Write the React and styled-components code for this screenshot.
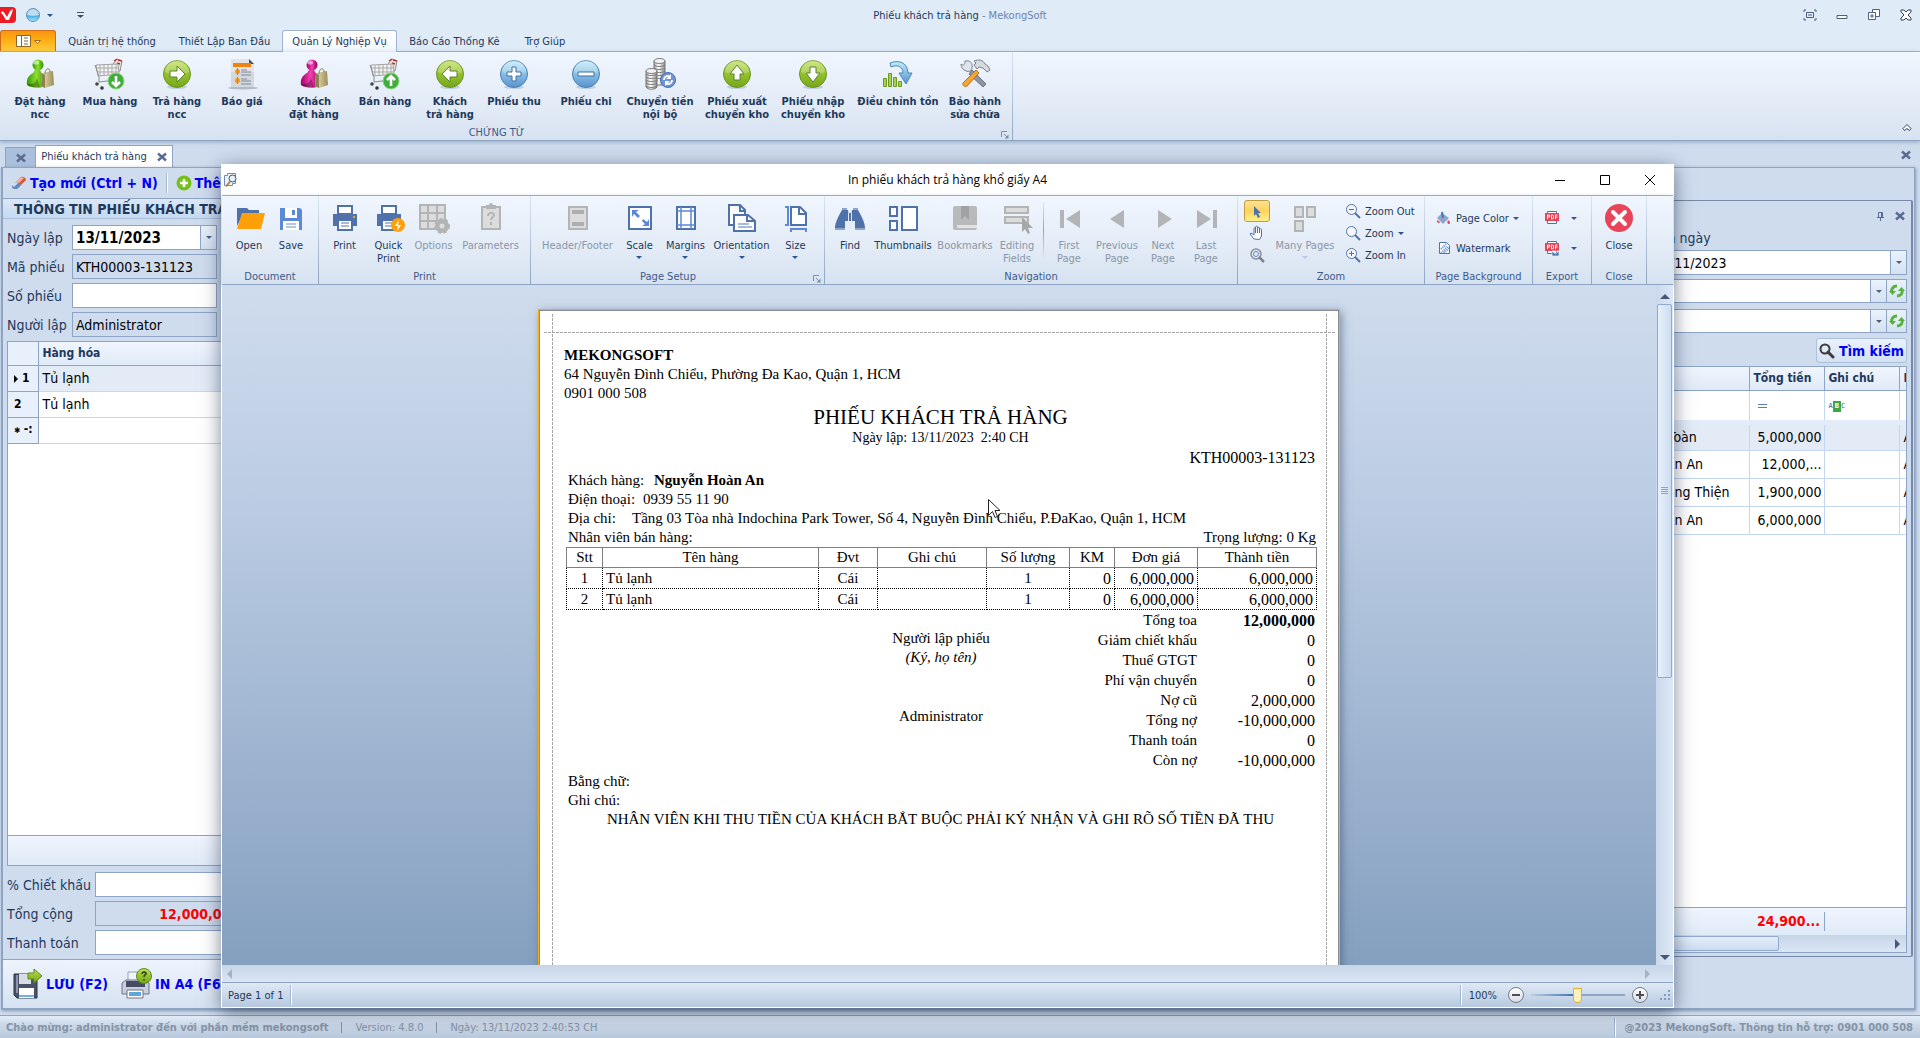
import React from 'react';
import styled, { createGlobalStyle, css } from 'styled-components';

const LINE = '#8da4c4';
const NAVY = '#1e395b';

/* ---------- icons ---------- */

const Defs = () => (
    <DefsSvg aria-hidden="true">
        <defs>
            <linearGradient id="green" x1="0" y1="0" x2="0" y2="1">
                <stop offset="0" stopColor="#c3e062" />
                <stop offset="0.5" stopColor="#93c22c" />
                <stop offset="1" stopColor="#76a51c" />
            </linearGradient>
            <linearGradient id="blue" x1="0" y1="0" x2="0" y2="1">
                <stop offset="0" stopColor="#c4ecf8" />
                <stop offset="0.5" stopColor="#86bfe4" />
                <stop offset="1" stopColor="#5a93cc" />
            </linearGradient>
            <linearGradient id="lime" x1="0" y1="0" x2="1" y2="0">
                <stop offset="0" stopColor="#2f9a05" />
                <stop offset="0.5" stopColor="#8fe02c" />
                <stop offset="1" stopColor="#2f8a05" />
            </linearGradient>
            <linearGradient id="pink" x1="0" y1="0" x2="1" y2="0">
                <stop offset="0" stopColor="#a3006a" />
                <stop offset="0.5" stopColor="#f43fb0" />
                <stop offset="1" stopColor="#8e0059" />
            </linearGradient>
            <linearGradient id="bag" x1="0" y1="0" x2="1" y2="0">
                <stop offset="0" stopColor="#efe6bd" />
                <stop offset="1" stopColor="#9c8c55" />
            </linearGradient>
            <linearGradient id="steel" x1="0" y1="0" x2="1" y2="0">
                <stop offset="0" stopColor="#a5a5a5" />
                <stop offset="0.4" stopColor="#ffffff" />
                <stop offset="1" stopColor="#8f8f8f" />
            </linearGradient>
            <linearGradient id="orb" x1="0" y1="0" x2="0" y2="1">
                <stop offset="0" stopColor="#5b93c8" />
                <stop offset="0.5" stopColor="#3aa5dd" />
                <stop offset="1" stopColor="#a8eaff" />
            </linearGradient>
        </defs>
    </DefsSvg>
);

const Svg = ({ s = 32, children }) => (
    <svg width={s} height={s} viewBox={`0 0 ${s} ${s}`} fill="none" aria-hidden="true">
        {children}
    </svg>
);

const arrows = {
    right: 'M9 13h7V8l8 8-8 8v-5H9z',
    left: 'M23 13h-7V8l-8 8 8 8v-5h7z',
    up: 'M13 22v-6H9l7-9 7 9h-4v6z',
    down: 'M13 9v6H9l7 9 7-9h-4V9z',
    plus: 'M14 9h4v5h5v4h-5v5h-4v-5H9v-4h5z',
    minus: 'M8 14h16v4H8z',
};

const RoundIcon = ({ kind, tone }) => (
    <Svg>
        <ellipse cx="16" cy="29" rx="10" ry="2" fill="#9fb0c4" opacity=".5" />
        <circle cx="16" cy="16" r="13.5" fill={`url(#${tone})`} stroke={tone === 'green' ? '#6b9422' : '#4a80b8'} />
        <path d="M4 14a12 12 0 0 1 24 0c-6 3-18 3-24 0z" fill="#fff" opacity=".22" />
        <path d={arrows[kind]} fill="#fff" stroke={tone === 'green' ? '#5d8030' : '#3f6ea5'} strokeLinejoin="round" />
    </Svg>
);

const PersonIcon = ({ tone }) => (
    <Svg>
        <path d="M3 27c-1-6 2-10 6-12l2-3h5l2 4c3 2 5 6 4 12-6 3-15 2-19-1z" fill={`url(#${tone})`} />
        <circle cx="14" cy="7" r="5.5" fill={`url(#${tone})`} />
        <ellipse cx="12" cy="4.5" rx="3" ry="2" fill="#fff" opacity=".55" />
        <path d="M3 27c4-3 7 2 10-7l3 9c-5 1-10 0-13-2z" fill="#000" opacity=".3" />
        <path d="M18 15l11-2 1 14-9 3-4-2z" fill="url(#bag)" />
        <path d="M18 15l3 2v13l-4-2z" fill="#8d8153" />
        <path d="M21 16c0-6 5-7 5-2" stroke="#8a7a49" />
    </Svg>
);

const CartIcon = ({ up }) => (
    <Svg>
        <path d="M19 6l4-5 5 2-2 10h-7z" fill="#e4e4e4" stroke="#8d8d8d" />
        <path d="M20 3l3-2M24 2l4 1M23 5l3 1" stroke="#b3322e" strokeWidth="1.5" />
        <path d="M2 7l22-1 1 10-21 2z" fill="#f4f4f4" stroke="#a3a3a3" />
        <path d="M6 7v10M10 7v10M14 6v11M18 6v10M22 6v10M3 10h21M3 14h21" stroke="#a9a9a9" />
        <path d="M1 7l4 12v5l16-2" stroke="#8d8d8d" />
        <circle cx="3" cy="26" r="1.8" fill="#444" />
        <circle cx="8" cy="30" r="1.8" fill="#333" />
        <circle cx="22" cy="23" r="8" fill="#3fae3c" stroke="#93d27c" />
        {up ? (
            <path d="M22 28v-9M18 22l4-4 4 4" stroke="#fff" strokeWidth="2.6" />
        ) : (
            <path d="M22 18v9M18 24l4 4 4-4" stroke="#fff" strokeWidth="2.6" />
        )}
    </Svg>
);

const QuoteIcon = () => (
    <Svg>
        <ellipse cx="17" cy="30" rx="15" ry="1.5" fill="#8e99a8" opacity=".6" />
        <path d="M5 1h18l5 5v23H5z" fill="#e2e4e8" />
        <path d="M5 14h23v15H5z" fill="#cfd1d6" opacity=".7" />
        <path d="M23 1v5h5z" fill="#4b4f55" />
        <path d="M7 5h18v4H7z" fill="#ee8311" />
        <path d="M15 12h6M15 14h10M15 17h10M15 21h6M15 23h10M15 26h10" stroke="#7d8c9c" />
        <circle cx="11.5" cy="13.5" r="2.5" fill="#f39a1f" />
        <circle cx="11.5" cy="22.5" r="2.5" fill="#f39a1f" />
        <path d="M11.5 10v7M11.5 19v7" stroke="#e27c08" />
    </Svg>
);

const CoinsIcon = () => (
    <Svg>
        <path d="M10 3v24h11V3" fill="url(#steel)" stroke="#777" />
        {[7, 10, 13, 16, 19].map((y) => (
            <path key={y} d={`M10 ${y}c2 2 9 2 11 0`} stroke="#777" />
        ))}
        <ellipse cx="15.5" cy="3" rx="5.5" ry="2.5" fill="#f1f1f1" stroke="#777" />
        <path d="M2 13v16c2 3 9 3 11 0V13" fill="url(#steel)" stroke="#777" />
        {[16, 19, 22, 25, 28].map((y) => (
            <path key={y} d={`M2 ${y}c2 2 9 2 11 0`} stroke="#777" />
        ))}
        <ellipse cx="7.5" cy="13" rx="5.5" ry="2.5" fill="#f1f1f1" stroke="#777" />
        <circle cx="24" cy="22" r="7.5" fill="#6d94d6" stroke="#4a6fb4" />
        <path d="M20 22c0-4 4-5 6-3M28 22c0 4-4 5-6 3" stroke="#fff" strokeWidth="1.8" />
        <path d="M27 16v5h-5zM21 28v-5h5z" fill="#fff" />
    </Svg>
);

const AdjustIcon = () => (
    <Svg>
        <path d="M1.5 20.5h3v8h-3zM6.5 15.5h3v13h-3zM11.5 19.5h3v9h-3zM16.5 23.5h3v5h-3z" fill="#a9cf55" stroke="#6b9a1e" />
        <path d="M8 5c10-4 18 1 18 10h4l-6 11-7-11h4c0-6-5-9-12-6z" fill="url(#blue)" stroke="#4f87b8" strokeLinejoin="round" />
    </Svg>
);

const ToolsIcon = () => (
    <Svg>
        <path d="M13 12l14 14-3 3-14-13z" fill="#8e95a6" stroke="#6b7280" />
        <path d="M2 6c2 2 4 1 4-3 5-1 8 2 7 7 0 3-3 4-6 3-3-1-5-4-5-7z" fill="#dfe3ea" stroke="#7b8290" />
        <path d="M15 3c5-2 9-1 11 3l3 2 2 4-3 2-4-4-4-1-2 2-3-4 2-2z" fill="#d5d9e0" stroke="#7b8290" />
        <path d="M17 12l3 3L8 28c-2 2-5-1-4-3z" fill="#f6a436" stroke="#b8741c" />
    </Svg>
);

const MenuIcon = () => (
    <svg width="26" height="14" viewBox="0 0 26 14" fill="none" aria-hidden="true">
        <path d="M1.5 1.5h14v11h-14zM6.5 1.5v11" fill="#fff" stroke="#8a6524" />
        <path d="M9 4h4M9 7h4M9 10h4" stroke="#8a6524" />
        <path d="M19.5 6.5h6L22.5 9.5z" fill="#fff" stroke="#a56c16" />
    </svg>
);

const LogoIcon = () => (
    <svg width="16" height="16" viewBox="0 0 16 16" fill="none" aria-hidden="true">
        <path d="M0 0h12a4 4 0 0 1 4 4v8a4 4 0 0 1-4 4H0z" fill="#ed1c24" />
        <path d="M1 5c2-1 3 0 4 2l2 3 3-6 3-2-1 4-3 7H6L3 8C2 7 1 6 1 5z" fill="#fff" />
    </svg>
);

const OrbIcon = () => (
    <Svg s={14}>
        <circle cx="7" cy="7" r="6.5" fill="url(#orb)" stroke="#6c8fb8" />
        <path d="M1 7a6 6 0 0 1 12 0c-3 1-9 1-12 0z" fill="#fff" opacity=".65" />
    </Svg>
);

const ChevronUp = () => (
    <Svg s={10}>
        <path d="M5 1.5L1 5.5l1.5 2L5 5.5l2.5 2L9 5.5z" fill="#fff" stroke="#33415c" />
    </Svg>
);

const XIcon = () => (
    <Svg s={10}>
        <path d="M1 1.5l8 7M9 1.5l-8 7" stroke="#5b6a8f" strokeWidth="2.4" />
    </Svg>
);

const Launcher = () => (
    <Svg s={8}>
        <path d="M.5 6V.5H6" stroke="#7d8fa9" />
        <path d="M3 3l3 3" stroke="#7d8fa9" />
        <path d="M7.5 3.5v4h-4z" fill="#7d8fa9" />
    </Svg>
);

const EraserIcon = () => (
    <Svg s={16}>
        <path d="M1 11l9-9c1-1 5 0 5 3l-9 9c-2 0-5 0-5-3z" fill="#d6573a" />
        <path d="M1 11l4-4 5 3-4 4c-2 0-5 0-5-3z" fill="#5d8ccb" />
        <path d="M5 7l5-5 3 1-5 5z" fill="#f3b29c" />
        <path d="M1 10l4-3 2 1-4 4z" fill="#cfe0f5" />
    </Svg>
);

const AddIcon = () => (
    <Svg s={16}>
        <circle cx="8" cy="8" r="7.5" fill="#76c01c" />
        <path d="M8 4v8M4 8h8" stroke="#fff" strokeWidth="2.6" />
    </Svg>
);

const SaveBigIcon = () => (
    <Svg>
        <path d="M3 6h23v24H6l-3-3z" fill="#4a5366" stroke="#2e3545" />
        <path d="M8 6h12v10H8z" fill="#d9dee6" />
        <path d="M5 7h2v18H5z" fill="#8d96a8" />
        <path d="M8 20h15v10H8z" fill="#fff" />
        <path d="M8 27h15v2H8z" fill="#69b5e8" />
        <path d="M17 5h6V1l8 7-8 7v-4h-6z" fill="url(#green)" stroke="#5d8a1e" />
    </Svg>
);

const PrintBigIcon = () => (
    <Svg>
        <path d="M8 4h13v12H8z" fill="#f1f4f8" stroke="#9aa2b4" />
        <path d="M2 15l4-3h20l3 3v11H2z" fill="#c9cedb" stroke="#6e7589" />
        <path d="M6 13h19v6H6z" fill="#454d63" />
        <path d="M7 22h16v8H7z" fill="#fff" stroke="#6e7589" />
        <path d="M9 24h12v4H9z" fill="#5fa6dd" />
        <circle cx="24" cy="8" r="7.5" fill="url(#green)" stroke="#5d8a1e" />
        <path d="M22 6c0-3 5-2 4 0-1 1-2 1-2 3M24 11v1.5" stroke="#2d4410" strokeWidth="1.6" />
    </Svg>
);

const PreviewIcon = () => (
    <Svg s={16}>
        <path d="M1.5 3.5h3v-2h8v10h-3v2h-8z" fill="#eef3fb" stroke="#6f8cb8" />
        <circle cx="9.5" cy="6.5" r="3.5" fill="#e3f1fb" stroke="#4c5766" />
        <path d="M7 9.5l-4 5" stroke="#b5824a" strokeWidth="2" />
    </Svg>
);

const D = '#5072aa';
const L = '#5b89d8';
const G = '#b3b4b6';
const GL = '#dcdcdd';

const icons = {
    open: (
        <Svg>
            <path d="M4 6h10l2 2h10v5H10L4 24z" fill={D} />
            <path d="M9 11h23l-4 16H4z" fill="#ff9f0a" />
        </Svg>
    ),
    save: (
        <Svg>
            <path d="M5 6h20l2 2v20H5z" fill={L} />
            <path d="M10 6h12v10H10zM8 19h16v9H8z" fill="#fff" />
            <path d="M17 8h3v5h-3z" fill={L} />
            <path d="M11 22h10M11 25h10" stroke="#9fb4d6" strokeWidth="1.5" />
        </Svg>
    ),
    print: (
        <Svg>
            <path d="M4 12h24v12H4z" fill={D} />
            <path d="M9 4h14v8H9zM9 18h14v10H9z" fill="#fff" stroke={D} strokeWidth="2" />
            <path d="M12 21h8M12 24h8" stroke="#8fa5cc" strokeWidth="1.5" />
            <path d="M24 14h2v2h-2z" fill="#ff9f0a" />
        </Svg>
    ),
    quick: (
        <Svg>
            <path d="M4 12h24v12H4z" fill={D} />
            <path d="M9 4h14v8H9zM9 18h14v10H9z" fill="#fff" stroke={D} strokeWidth="2" />
            <path d="M12 21h8M12 24h8" stroke="#8fa5cc" strokeWidth="1.5" />
            <circle cx="25" cy="23" r="7" fill="#ff9f0a" />
            <path d="M26 18l-4 6h3l-1 5 4-6h-3z" fill="#fff" />
        </Svg>
    ),
    options: (
        <Svg>
            <path d="M2 3h25v24H2z" fill={GL} stroke={G} strokeWidth="2" />
            <path d="M10 3v24M19 3v24M2 11h25M2 19h25" stroke={G} strokeWidth="2" />
            <circle cx="24" cy="24" r="7" fill={G} stroke={G} strokeWidth="2" strokeDasharray="3 3" />
            <circle cx="24" cy="24" r="2.5" fill={GL} />
        </Svg>
    ),
    params: (
        <Svg>
            <path d="M7 5h18v22H7z" fill={GL} stroke={G} strokeWidth="2" />
            <path d="M11 3h3a2 2 0 0 1 4 0h3v4H11z" fill={G} />
            <path d="M13 14c0-4 6-4 6-1 0 2-3 2-3 5M16 20v3" stroke={G} strokeWidth="2" />
        </Svg>
    ),
    header: (
        <Svg>
            <path d="M7 5h18v22H7z" fill={GL} stroke={G} strokeWidth="2" />
            <path d="M10 8h12v4H10zM10 20h12v4H10z" fill="#adaeb0" />
        </Svg>
    ),
    scale: (
        <Svg>
            <path d="M5 5h22v22H5z" fill="#fff" stroke={D} strokeWidth="2" />
            <path d="M8 8h7l-3 2 4 4-2 2-4-4-2 3zM25 24h-7l3-2-3-3 1-2 4 3 2-3z" fill={L} />
        </Svg>
    ),
    margins: (
        <Svg>
            <path d="M7 5h18v22H7z" fill="#fff" stroke={D} strokeWidth="2" />
            <path d="M11 5v22M21 5v22M7 9h18M7 23h18" stroke={L} strokeWidth="1.5" />
        </Svg>
    ),
    orientation: (
        <Svg>
            <path d="M3 3h11l5 5v15H3z" fill="#fff" stroke={D} strokeWidth="2" />
            <path d="M14 3v6h5" stroke={D} strokeWidth="2" />
            <path d="M8 13h14l7 6v10H8z" fill="#fff" stroke={D} strokeWidth="2" />
            <path d="M21 13v6h8" stroke={D} strokeWidth="2" />
            <path d="M12 22h11M12 25h14" stroke="#8fa5cc" strokeWidth="1.5" />
        </Svg>
    ),
    size: (
        <Svg>
            <path d="M11 5h9l6 6v12H11z" fill="#fff" stroke={D} strokeWidth="2" />
            <path d="M19 5v7h7" stroke={D} strokeWidth="2" />
            <path d="M5 5h3v18H5M11 30v-3h15v3" stroke={L} strokeWidth="2" />
        </Svg>
    ),
    find: (
        <Svg>
            <path d="M8 8h6l1 6v12H1c0-5 3-11 7-18zM24 8h-6l-1 6v12h14c0-5-3-11-7-18z" fill={D} />
            <path d="M8 6h5v2H8zM19 6h5v2h-5zM1 26h10v2H1zM21 26h10v2H21z" fill="#8fa5cc" />
            <path d="M11 19h10v8H11z" fill="#e3ecf7" />
            <path d="M14 11h4v8h-4z" fill="#dfe9f5" />
            <path d="M16 11v8" stroke={D} strokeWidth="2" />
        </Svg>
    ),
    thumbs: (
        <Svg>
            <path d="M3 5h7v9H3zM3 19h7v9H3zM15 5h15v23H15z" fill="#fff" stroke={D} strokeWidth="2" />
        </Svg>
    ),
    bookmarks: (
        <Svg>
            <rect x="4" y="4" width="24" height="24" rx="2" fill="#b9babb" />
            <path d="M8 23h20v3H8z" fill="#e2e2e2" />
            <path d="M12 4h8v14l-4-4-4 4z" fill="#a1a2a4" />
        </Svg>
    ),
    fields: (
        <Svg>
            <path d="M4 5h23v6H4zM4 15h23v6H4z" fill={GL} stroke={G} strokeWidth="2" />
            <path d="M21 15v15l3-3 3 5 2-1-2-5h5z" fill="#a6a7a9" />
        </Svg>
    ),
    first: <Svg><path d="M7 8h4v18H7zM27 8v18L13 17z" fill={G} /></Svg>,
    prev: <Svg><path d="M23 8v18L9 17z" fill={G} /></Svg>,
    next: <Svg><path d="M11 8v18l14-9z" fill={G} /></Svg>,
    last: <Svg><path d="M7 8v18l14-9zM23 8h4v18h-4z" fill={G} /></Svg>,
    many: (
        <Svg>
            <path d="M6 5h8v10H6zM18 5h8v10h-8zM6 19h8v10H6z" fill={GL} stroke={G} strokeWidth="2" />
        </Svg>
    ),
    close: (
        <Svg>
            <circle cx="16" cy="16" r="14" fill="#e8445a" />
            <path d="M10 10l12 12M22 10L10 22" stroke="#fff" strokeWidth="4" strokeLinecap="round" />
        </Svg>
    ),
};

const Lens = ({ sign }) => (
    <Svg s={16}>
        <circle cx="6.5" cy="6.5" r="5" fill="#f4f8fd" stroke={D} />
        <path d="M10 10l5 5" stroke={D} strokeWidth="2" />
        {sign && <path d={sign} stroke={D} />}
    </Svg>
);

const smallIcons = {
    pointer: <Svg s={16}><path d="M5 3v10l2-2 2 4 2-1-2-4h3z" fill={D} /></Svg>,
    hand: (
        <Svg s={16}>
            <path d="M5 14l-4-5 1-1 3 2V3.5c0-1 1.500-1 1.500 0V2c0-1 2-1 2 0v1c0-1 2-1 2 0v1.500c0-1 2-1 2 0V11l-2 3.500z" fill="#fff" stroke={D} />
            <path d="M6.5 3v5M8.5 3v5M10.5 4v4" stroke={D} />
        </Svg>
    ),
    magnifier: (
        <Svg s={16}>
            <circle cx="7" cy="7" r="5" fill="#e3e7ee" stroke="#8a8f98" strokeWidth="1.5" />
            <circle cx="7" cy="7" r="2.5" stroke={L} />
            <path d="M10 10l5 5" stroke="#7d828b" strokeWidth="2.5" />
        </Svg>
    ),
    zoomOut: <Lens sign="M4 6.500h5" />,
    zoom: <Lens />,
    zoomIn: <Lens sign="M4 6.500h5M6.500 4v5" />,
    color: (
        <Svg s={16}>
            <path d="M6 3l7 5-6 6-6-6z" fill="#8ea6cf" />
            <path d="M6 2l1 6" stroke={D} strokeWidth="2" />
            <path d="M1 10c-1 3 3 4 3 2zM12 10c2 1 3 4 1 4s-2-2-1-4z" fill="#e8445a" />
        </Svg>
    ),
    watermark: (
        <Svg s={16}>
            <path d="M3.5 2.5h7l3 3v8h-10z" fill="#fff" stroke={D} />
            <path d="M5 13l7-7M5 9l5-5M8 13l5-5" stroke={L} strokeDasharray="1 1" strokeWidth="2" />
        </Svg>
    ),
};

const PdfIcon = ({ mail }) => (
    <PdfBox>
        <svg width="14" height="16" viewBox="0 0 14 16" fill="none" aria-hidden="true">
            <path d="M2.5 3V1.5h9V3M2.5 10v3.5h9V10" fill="#fff" stroke={D} />
            <path d="M0 3h14v8H0z" fill="#e8445a" />
            <path d="M2.5 9V5h2v2h-2M6.5 5h1l1 1v2l-1 1h-1zM10.5 9V5h2M10.5 7h2" stroke="#fff" strokeWidth=".9" />
            {mail && <path d="M7 11h7v5H7zl3.5 3L14 11" fill={D} stroke="#fff" strokeWidth=".6" />}
        </svg>
    </PdfBox>
);

const RefreshIcon = () => (
    <Svg s={16}>
        <path d="M3 9C2 6 4 3 8 3" stroke="#57b13c" strokeWidth="3" />
        <path d="M13 7c1 3-1 6-5 6" stroke="#57b13c" strokeWidth="3" />
        <path d="M0 8h7l-3.5 4zM16 8H9l3.5-4z" fill="#57b13c" />
    </Svg>
);

const Lookup = () => (
    <Svg s={16}>
        <circle cx="6" cy="6" r="4.5" stroke="#3c3c3c" strokeWidth="2" />
        <path d="M9 9l5 5" stroke="#3c3c3c" strokeWidth="3" strokeLinecap="round" />
    </Svg>
);

/* ---------- data ---------- */

const tabs = [
    ['Quản trị hệ thống', 110],
    ['Thiết Lập Ban Đầu', 115],
    ['Quản Lý Nghiệp Vụ', 115],
    ['Báo Cáo Thống Kê', 115],
    ['Trợ Giúp', 66],
];

const commands = [
    { label: ['Đặt hàng', 'ncc'], w: 66, icon: <PersonIcon tone="lime" /> },
    { label: ['Mua hàng'], w: 74, icon: <CartIcon /> },
    { label: ['Trả hàng', 'ncc'], w: 60, icon: <RoundIcon kind="right" tone="green" /> },
    { label: ['Báo giá'], w: 70, icon: <QuoteIcon /> },
    { label: ['Khách', 'đặt hàng'], w: 74, icon: <PersonIcon tone="pink" /> },
    { label: ['Bán hàng'], w: 68, icon: <CartIcon up /> },
    { label: ['Khách', 'trả hàng'], w: 62, icon: <RoundIcon kind="left" tone="green" /> },
    { label: ['Phiếu thu'], w: 66, icon: <RoundIcon kind="plus" tone="blue" /> },
    { label: ['Phiếu chi'], w: 78, icon: <RoundIcon kind="minus" tone="blue" /> },
    { label: ['Chuyển tiền', 'nội bộ'], w: 70, icon: <CoinsIcon /> },
    { label: ['Phiếu xuất', 'chuyển kho'], w: 84, icon: <RoundIcon kind="up" tone="green" /> },
    { label: ['Phiếu nhập', 'chuyển kho'], w: 68, icon: <RoundIcon kind="down" tone="green" /> },
    { label: ['Điều chỉnh tồn'], w: 102, icon: <AdjustIcon /> },
    { label: ['Bảo hành', 'sửa chữa'], w: 52, icon: <ToolsIcon /> },
];

const printGroups = {
    document: [
        { label: ['Open'], w: 42, icon: 'open' },
        { label: ['Save'], w: 42, icon: 'save' },
    ],
    print: [
        { label: ['Print'], w: 42, icon: 'print' },
        { label: ['Quick', 'Print'], w: 46, icon: 'quick' },
        { label: ['Options'], w: 44, icon: 'options', off: true },
        { label: ['Parameters'], w: 70, icon: 'params', off: true },
    ],
    setup: [
        { label: ['Header/Footer'], w: 78, icon: 'header', off: true },
        { label: ['Scale'], w: 46, icon: 'scale', drop: true },
        { label: ['Margins'], w: 46, icon: 'margins', drop: true },
        { label: ['Orientation'], w: 66, icon: 'orientation', drop: true },
        { label: ['Size'], w: 42, icon: 'size', drop: true },
    ],
    find: [
        { label: ['Find'], w: 36, icon: 'find' },
        { label: ['Thumbnails'], w: 70, icon: 'thumbs' },
        { label: ['Bookmarks'], w: 54, icon: 'bookmarks', off: true },
        { label: ['Editing', 'Fields'], w: 50, icon: 'fields', off: true },
    ],
    pages: [
        { label: ['First', 'Page'], w: 48, icon: 'first', off: true },
        { label: ['Previous', 'Page'], w: 48, icon: 'prev', off: true },
        { label: ['Next', 'Page'], w: 44, icon: 'next', off: true },
        { label: ['Last', 'Page'], w: 42, icon: 'last', off: true },
    ],
};

const results = [
    ['Nguyễn Lê Toàn', '5,000,000'],
    ['Nguyễn Hoàn An', '12,000,...'],
    ['Nguyễn Hoàng Thiện', '1,900,000'],
    ['Nguyễn Hoàn An', '6,000,000'],
];

const items = [
    ['1', 'Tủ lạnh', 'Cái', '', '1', '0', '6,000,000', '6,000,000'],
    ['2', 'Tủ lạnh', 'Cái', '', '1', '0', '6,000,000', '6,000,000'],
];

const totals = [
    ['Tổng toa', '12,000,000'],
    ['Giảm chiết khấu', '0'],
    ['Thuế GTGT', '0'],
    ['Phí vận chuyển', '0'],
    ['Nợ cũ', '2,000,000'],
    ['Tổng nợ', '-10,000,000'],
    ['Thanh toán', '0'],
    ['Còn nợ', '-10,000,000'],
];

/* ---------- parts ---------- */

const Commands = ({ list }) => list.map(({ label, w, icon, off, drop }) => (
    <Command key={label.join(' ')} $w={w} disabled={off}>
        {typeof icon === 'string' ? icons[icon] : icon}
        <CommandLabel>
            {label.map((line) => <span key={line}>{line}</span>)}
            {drop && <Caret $gap />}
        </CommandLabel>
    </Command>
));

const Report = () => (
    <Page>
        <b>MEKONGSOFT</b>
        <p>64 Nguyễn Đình Chiểu, Phường Đa Kao, Quận 1, HCM</p>
        <p>0901 000 508</p>
        <ReportTitle>PHIẾU KHÁCH TRẢ HÀNG</ReportTitle>
        <ReportDate>Ngày lập: 13/11/2023&nbsp; 2:40 CH</ReportDate>
        <ReportCode>KTH00003-131123</ReportCode>
        <Facts>
            <Fact $w={86}><dt>Khách hàng:</dt><dd><b>Nguyễn Hoàn An</b></dd></Fact>
            <Fact $w={75}><dt>Điện thoại:</dt><dd>0939 55 11 90</dd></Fact>
            <Fact $w={64}>
                <dt>Địa chỉ:</dt>
                <dd>Tầng 03 Tòa nhà Indochina Park Tower, Số 4, Nguyễn Đình Chiểu, P.ĐaKao, Quận 1, HCM</dd>
            </Fact>
            <Fact $spread><dt>Nhân viên bán hàng:</dt><dd>Trọng lượng: 0 Kg</dd></Fact>
        </Facts>
        <ItemTable>
            <colgroup>
                {[36, 216, 59, 109, 83, 45, 83, 119].map((w, i) => <col key={i} width={w} />)}
            </colgroup>
            <thead>
                <tr>
                    {['Stt', 'Tên hàng', 'Đvt', 'Ghi chú', 'Số lượng', 'KM', 'Đơn giá', 'Thành tiền'].map((h) => (
                        <th key={h}>{h}</th>
                    ))}
                </tr>
            </thead>
            <tbody>
                {items.map((row) => (
                    <tr key={row[0]}>{row.map((v, i) => <td key={i}>{v}</td>)}</tr>
                ))}
            </tbody>
        </ItemTable>
        <Summary>
            <Signer>
                <span>Người lập phiếu</span>
                <i>(Ký, họ tên)</i>
                <span>Administrator</span>
            </Signer>
            <Totals>
                <tbody>
                    {totals.map(([name, value]) => (
                        <tr key={name}><th>{name}</th><td>{value}</td></tr>
                    ))}
                </tbody>
            </Totals>
        </Summary>
        <Notes>
            <p>Bằng chữ:</p>
            <p>Ghi chú:</p>
            <Warning>NHÂN VIÊN KHI THU TIỀN CỦA KHÁCH BẮT BUỘC PHẢI KÝ NHẬN VÀ GHI RÕ SỐ TIỀN ĐÃ THU</Warning>
        </Notes>
    </Page>
);

const PrintWindow = () => (
    <Window>
        <WindowTitle>
            <WindowIcon><PreviewIcon /></WindowIcon>
            <h2>In phiếu khách trả hàng khổ giấy A4</h2>
            <WindowButtons>
                <button aria-label="Minimize"><Svg s={10}><path d="M0 5.500h10" stroke="#000" /></Svg></button>
                <button aria-label="Maximize"><Svg s={10}><path d="M.5.5h9v9h-9z" stroke="#000" /></Svg></button>
                <button aria-label="Close window"><Svg s={10}><path d="M0 0l10 10M10 0L0 10" stroke="#000" /></Svg></button>
            </WindowButtons>
        </WindowTitle>
        <Ribbon>
            <Group $w={97}><Row><Commands list={printGroups.document} /></Row><Caption>Document</Caption></Group>
            <Group $w={212}><Row><Commands list={printGroups.print} /></Row><Caption>Print</Caption></Group>
            <Group $w={294}>
                <Row><Commands list={printGroups.setup} /></Row>
                <Caption $launcher>Page Setup</Caption>
                <LauncherButton aria-label="Page setup"><Launcher /></LauncherButton>
            </Group>
            <Group $w={413}>
                <Row $pad={7}>
                    <Commands list={printGroups.find} />
                    <Divider />
                    <Commands list={printGroups.pages} />
                </Row>
                <Caption>Navigation</Caption>
            </Group>
            <Group $w={187}>
                <Row $pad={6}>
                    <Stack>
                        <ToolButton $on aria-label="Pointer">{smallIcons.pointer}</ToolButton>
                        <ToolButton aria-label="Hand tool">{smallIcons.hand}</ToolButton>
                        <ToolButton aria-label="Magnifier">{smallIcons.magnifier}</ToolButton>
                    </Stack>
                    <Commands list={[{ label: ['Many Pages'], w: 70, icon: 'many', off: true, drop: true }]} />
                    <Stack>
                        <LineButton>{smallIcons.zoomOut}Zoom Out</LineButton>
                        <LineButton>{smallIcons.zoom}Zoom<Caret /></LineButton>
                        <LineButton>{smallIcons.zoomIn}Zoom In</LineButton>
                    </Stack>
                </Row>
                <Caption>Zoom</Caption>
            </Group>
            <Group $w={108}>
                <Row $pad={6}>
                    <Stack $tall>
                        <LineButton>{smallIcons.color}Page Color<Caret /></LineButton>
                        <LineButton>{smallIcons.watermark}Watermark</LineButton>
                    </Stack>
                </Row>
                <Caption>Page Background</Caption>
            </Group>
            <Group $w={59}>
                <Row $pad={7}>
                    <Stack $tall>
                        <LineButton aria-label="Export PDF"><PdfIcon /><Caret /></LineButton>
                        <LineButton aria-label="Mail PDF"><PdfIcon mail /><Caret /></LineButton>
                    </Stack>
                </Row>
                <Caption>Export</Caption>
            </Group>
            <Group $w={55}>
                <Row><Commands list={[{ label: ['Close'], w: 46, icon: 'close' }]} /></Row>
                <Caption>Close</Caption>
            </Group>
        </Ribbon>
        <Preview>
            <PreviewArea>
                <Report />
            </PreviewArea>
            <VScroll>
                <Arrow $dir="up" />
                <VThumb><Grip /></VThumb>
                <VRest />
                <Arrow $dir="down" />
            </VScroll>
        </Preview>
        <HScroll $wide><Arrow $dir="left" $off /><Arrow $dir="right" $off /></HScroll>
        <PreviewStatus>
            <span>Page 1 of 1</span>
            <Separator />
            <Spacer />
            <Separator />
            <label htmlFor="zoom">100%</label>
            <RoundButton aria-label="Zoom out"><Svg s={10}><path d="M1 5h8" stroke="#4c4f5a" strokeWidth="2" /></Svg></RoundButton>
            <ZoomRange id="zoom" type="range" min="0" max="100" defaultValue="49" />
            <RoundButton aria-label="Zoom in"><Svg s={10}><path d="M1 5h8M5 1v8" stroke="#4c4f5a" strokeWidth="2" /></Svg></RoundButton>
            <Svg s={12}>
                <path d="M9 1h2v2H9zM9 5h2v2H9zM9 9h2v2H9zM5 5h2v2H5zM5 9h2v2H5zM1 9h2v2H1z" fill="#7f9dc6" />
            </Svg>
        </PreviewStatus>
    </Window>
);

const EntryPanel = () => (
    <Entry>
        <PanelTitle>THÔNG TIN PHIẾU KHÁCH TRẢ HÀNG</PanelTitle>
        <Form>
            <Field>
                <label htmlFor="date">Ngày lập</label>
                <Box>
                    <Text id="date" defaultValue="13/11/2023" $bold />
                    <DropButton aria-label="Chọn ngày"><Caret $dark /></DropButton>
                </Box>
            </Field>
            <Field>
                <label htmlFor="code">Mã phiếu</label>
                <Box $locked><Text id="code" defaultValue="KTH00003-131123" readOnly /></Box>
            </Field>
            <Field>
                <label htmlFor="number">Số phiếu</label>
                <Box><Text id="number" /></Box>
            </Field>
            <Field>
                <label htmlFor="author">Người lập</label>
                <Box $locked><Text id="author" defaultValue="Administrator" readOnly /></Box>
            </Field>
        </Form>
        <Sheet>
            <GoodsTable>
                <thead><tr><th aria-label="#" /><th>Hàng hóa</th></tr></thead>
                <tbody>
                    <tr className="current"><th><RowMark />1</th><td>Tủ lạnh</td></tr>
                    <tr><th>2</th><td>Tủ lạnh</td></tr>
                    <tr><th><small>✱</small> -:</th><td /></tr>
                </tbody>
            </GoodsTable>
            <SheetFoot />
        </Sheet>
        <Form>
            <Field $wide>
                <label htmlFor="discount">% Chiết khấu</label>
                <Box><Text id="discount" /></Box>
            </Field>
            <Field $wide>
                <label htmlFor="total">Tổng cộng</label>
                <Box $locked><Text id="total" defaultValue="12,000,000" readOnly $total /></Box>
            </Field>
            <Field $wide>
                <label htmlFor="paid">Thanh toán</label>
                <Box><Text id="paid" /></Box>
            </Field>
        </Form>
        <Actions>
            <BlueButton><SaveBigIcon />LƯU (F2)</BlueButton>
            <BlueButton><PrintBigIcon />IN A4 (F6)</BlueButton>
        </Actions>
    </Entry>
);

const SearchPanel = () => (
    <Dock>
        <DockTools>
            <button aria-label="Ghim"><Svg s={10}><path d="M2.5 6V1.5h4V6M1 6.5h7M5.5 1v5M4.5 7v3" stroke="#5b6a8f" /></Svg></button>
            <button aria-label="Đóng"><XIcon /></button>
        </DockTools>
        <SearchForm>
            <label htmlFor="to">Đến ngày</label>
            <Box>
                <Text id="to" defaultValue="13/11/2023" />
                <DropButton aria-label="Chọn ngày"><Caret $dark /></DropButton>
            </Box>
            <Box $low>
                <Select aria-label="Khách hàng" />
                <DropButton aria-label="Mở"><Caret $dark /></DropButton>
                <RefreshButton aria-label="Làm mới khách hàng"><RefreshIcon /></RefreshButton>
            </Box>
            <Box $low>
                <Select aria-label="Nhân viên" />
                <DropButton aria-label="Mở"><Caret $dark /></DropButton>
                <RefreshButton aria-label="Làm mới nhân viên"><RefreshIcon /></RefreshButton>
            </Box>
        </SearchForm>
        <SearchButton><Lookup />Tìm kiếm</SearchButton>
        <ResultSheet>
            <ResultTable>
                <colgroup><col /><col width="75" /><col width="75" /><col width="7" /></colgroup>
                <thead>
                    <tr><th>Khách hàng</th><th>Tổng tiền</th><th>Ghi chú</th><th>N</th></tr>
                </thead>
                <tbody>
                    <tr className="filter">
                        <td />
                        <td><Svg s={16}><path d="M4 6.500h9M4 9.500h9" stroke="#5b7fb5" /></Svg></td>
                        <td><FilterMark><span>A</span><b>B</b><span>C</span></FilterMark></td>
                        <td />
                    </tr>
                    {results.map(([name, sum], i) => (
                        <tr key={i} className={i === 0 ? 'current' : ''}>
                            <td>{name}</td><td className="num">{sum}</td><td /><td>A</td>
                        </tr>
                    ))}
                </tbody>
            </ResultTable>
            <Spacer />
            <ResultFoot><span>24,900...</span></ResultFoot>
            <HScroll><HThumb /><Spacer /><Arrow $dir="right" /></HScroll>
        </ResultSheet>
    </Dock>
);

const App = () => (
    <Shell>
        <GlobalStyle />
        <Defs />
        <TitleBar>
            <Quick>
                <LogoIcon />
                <OrbIcon />
                <Caret />
                <Svg s={8}><path d="M1 1.500h7" stroke="#454f60" /><path d="M1 4h7L4.500 7z" fill="#454f60" /></Svg>
            </Quick>
            <h1>Phiếu khách trả hàng <span>- MekongSoft</span></h1>
            <AppButtons>
                <button aria-label="Toàn màn hình"><Svg s={14}><path d="M1 4V2h2M11 2h2v2M13 10v2h-2M3 12H1v-2M3.5 4.5h7v5h-7zM5 7h4" stroke="#4f5f7e" /></Svg></button>
                <button aria-label="Thu nhỏ"><Svg s={14}><path d="M2 7.500h10v3H2z" fill="#fff" stroke="#4f5f7e" /></Svg></button>
                <button aria-label="Khôi phục"><Svg s={14}><path d="M5.5 1.5h7v7h-7z" fill="#fff" stroke="#4f5f7e" /><path d="M1.5 4.5h7v7h-7zM4 7h2v2H4z" fill="#fff" stroke="#4f5f7e" /></Svg></button>
                <button aria-label="Thoát"><Svg s={14}><path d="M2 2h3l2 2 2-2h3v2L9 7l3 3v2H9l-2-2-2 2H2v-2l3-3-3-3z" fill="#fff" stroke="#33415c" /></Svg></button>
            </AppButtons>
        </TitleBar>
        <Tabs>
            <StartButton aria-label="Menu"><MenuIcon /></StartButton>
            {tabs.map(([name, w]) => (
                <Tab key={name} $w={w} $on={name === 'Quản Lý Nghiệp Vụ'}>{name}</Tab>
            ))}
        </Tabs>
        <Ribbon $bold>
            <Group $w={1013}>
                <Row $pad={7}><Commands list={commands} /></Row>
                <Caption $launcher>CHỨNG TỪ</Caption>
                <LauncherButton aria-label="Chứng từ"><Launcher /></LauncherButton>
            </Group>
            <Spacer />
            <Collapse aria-label="Thu gọn"><ChevronUp /></Collapse>
        </Ribbon>
        <DocTabs>
            <DocTab aria-label="Đóng tab"><XIcon /></DocTab>
            <DocTab $on>Phiếu khách trả hàng<XIcon /></DocTab>
            <Spacer />
            <CloseDoc aria-label="Đóng"><XIcon /></CloseDoc>
        </DocTabs>
        <Main>
            <Toolbar>
                <BlueButton><EraserIcon />Tạo mới (Ctrl + N)</BlueButton>
                <Separator />
                <BlueButton><AddIcon />Thêm hàng hóa</BlueButton>
            </Toolbar>
            <Columns>
                <EntryPanel />
                <SearchPanel />
            </Columns>
        </Main>
        <StatusBar>
            <b>Chào mừng: administrator đến với phần mềm mekongsoft</b>
            <i />
            <span>Version: 4.8.0</span>
            <i />
            <span>Ngày: 13/11/2023 2:40:53 CH</span>
            <Spacer />
            <Separator />
            <b>@2023 MekongSoft. Thông tin hỗ trợ: 0901 000 508</b>
        </StatusBar>
        <PrintWindow />
        <Pointer width="12" height="19" viewBox="0 0 12 19" aria-hidden="true">
            <path d="M.5.5v16l4-4 2.500 6 2.500-1-2.500-6h5z" fill="#fff" stroke="#222" />
        </Pointer>
    </Shell>
);

export default App;

/* ---------- styles ---------- */

const GlobalStyle = createGlobalStyle`
    * { box-sizing: border-box; }
    body {
        margin: 0;
        font: 11px/13px 'DejaVu Sans Condensed', 'DejaVu Sans', 'Noto Sans', sans-serif;
        color: ${NAVY};
    }
    h1, h2, p, dl, dd { margin: 0; font-weight: inherit; }
    button { border: 0; padding: 0; background: none; font: inherit; color: inherit; }
    svg { flex: none; }
`

const DefsSvg = styled.svg`
    display: block;
    width: 0;
    height: 0;
`

const Shell = styled.div`
    position: relative;
    display: flex;
    flex-direction: column;
    min-height: 100vh;
    overflow: hidden;
    background: #cfdcee;
`

const TitleBar = styled.header`
    display: grid;
    grid-template-columns: 1fr auto 1fr;
    align-items: center;
    height: 30px;
    background: #dfebf7;

    h1 { font-size: 11px; }
    h1 span { color: #6d84b0; }
`

const Quick = styled.div`
    display: flex;
    align-items: center;

    svg:nth-child(2) { margin: 0 7px 0 10px; }
    svg:last-child { margin-left: 23px; }
`

const AppButtons = styled.div`
    display: flex;
    justify-content: flex-end;
    gap: 18px;
    padding-right: 7px;

    button { height: 14px; }
`

const Tabs = styled.nav`
    display: flex;
    height: 22px;
    border-bottom: 1px solid #a1b4cf;
    background: #dfebf7;
`

const StartButton = styled.button`
    display: flex;
    align-items: center;
    justify-content: center;
    width: 56px;
    margin-right: 1px;
    border: 1px solid #cf6c1b;
    border-bottom: 0;
    border-radius: 3px 3px 0 0;
    background: linear-gradient(#f9940f, #fdb015 50%, #ffce3c);
`

const Tab = styled.button`
    width: ${props => props.$w}px;
    height: 22px;
    padding-top: 1px;
    white-space: nowrap;
    border-radius: 3px 3px 0 0;
    ${props => props.$on && css`
        padding-top: 0;
        border: 1px solid #a1b4cf;
        border-bottom: 0;
        background: linear-gradient(#fff, #f2f7fe);
    `}
`

const Ribbon = styled.div`
    display: flex;
    height: 89px;
    border-bottom: 1px solid ${LINE};
    background: linear-gradient(#f0f6fe, #e2ebf6 60%, #d7e2f1);
    box-shadow: 0 1px 4px rgba(90, 115, 150, .5);
    font-weight: ${props => props.$bold ? 'bold' : 'normal'};
`

const Group = styled.section`
    position: relative;
    display: flex;
    flex-direction: column;
    flex: none;
    width: ${props => props.$w}px;
    padding-top: 6px;
    border-right: 1px solid;
    border-image: linear-gradient(#dbe6f3, ${LINE}) 1;
`

const Row = styled.div`
    display: flex;
    justify-content: ${props => props.$pad ? 'flex-start' : 'center'};
    flex: 1;
    padding-left: ${props => props.$pad || 0}px;
`

const Caption = styled.div`
    height: 14px;
    padding-right: ${props => props.$launcher ? 19 : 0}px;
    text-align: center;
    font-weight: normal;
    color: #3f5a8a;
`

const LauncherButton = styled.button`
    position: absolute;
    right: 3px;
    bottom: 3px;
    height: 8px;
`

const Command = styled.button`
    display: flex;
    flex-direction: column;
    align-items: center;
    width: ${props => props.$w}px;
    white-space: nowrap;
    color: ${props => props.disabled ? '#8b97a8' : NAVY};
`

const CommandLabel = styled.span`
    display: flex;
    flex-direction: column;
    align-items: center;
    margin-top: 5px;
`

const Caret = styled.i`
    display: inline-block;
    flex: none;
    border: 3px solid transparent;
    border-top-color: ${props => props.$dark ? '#4d5f80' : '#2c5591'};
    border-bottom: 0;
    margin-top: ${props => props.$gap ? 4 : 0}px;
    button:disabled & { border-top-color: #b9cbe4; }
`

const Divider = styled.i`
    width: 1px;
    height: 56px;
    margin: 0 1px;
    background: linear-gradient(#dbe6f3, ${LINE} 50%, #dbe6f3);
`

const Stack = styled.div`
    display: flex;
    flex-direction: column;
    gap: ${props => props.$tall ? 8 : 0}px;
    padding-top: ${props => props.$tall ? 5 : 0}px;
    margin-top: ${props => props.$tall ? 0 : -2}px;
`

const ToolButton = styled.button`
    display: flex;
    align-items: center;
    justify-content: center;
    width: 26px;
    height: 22px;
    border: 1px solid transparent;
    border-radius: 3px;
    ${props => props.$on && css`
        border-color: #c39a3f;
        background: linear-gradient(#fbe293, #fdd35b 50%, #fff08a);
    `}
`

const LineButton = styled.button`
    display: flex;
    align-items: center;
    gap: 4px;
    height: 22px;
    padding-left: 5px;
    white-space: nowrap;
`

const PdfBox = styled.span`
    display: flex;
    margin-right: 8px;
`

const Collapse = styled.button`
    align-self: flex-end;
    margin: 0 8px 4px 0;
`

const DocTabs = styled.div`
    display: flex;
    align-items: flex-end;
    height: 26px;
    padding-left: 5px;
`

const DocTab = styled.button`
    display: flex;
    align-items: center;
    justify-content: center;
    gap: 10px;
    width: ${props => props.$on ? 138 : 30}px;
    height: ${props => props.$on ? 22 : 20}px;
    border: 1px solid ${LINE};
    border-bottom: 0;
    border-right-width: ${props => props.$on ? 1 : 0}px;
    background: ${props => props.$on ? '#fff' : '#a9bfdc'};
    white-space: nowrap;
`

const CloseDoc = styled.button`
    align-self: center;
    height: 10px;
    margin: 2px 9px 0 0;
`

const Main = styled.main`
    display: flex;
    flex: 1;
    flex-direction: column;
    margin: 0 5px 5px 1px;
    border: 1px solid ${LINE};
    border-left-width: 2px;
    border-bottom-width: 2px;
    box-shadow: 1px 1px 3px rgba(60, 85, 120, .5);
`

const Toolbar = styled.div`
    display: flex;
    align-items: center;
    gap: 8px;
    height: 30px;
    padding-left: 8px;
`

const BlueButton = styled.button`
    display: flex;
    align-items: center;
    gap: 3px;
    white-space: nowrap;
    font-size: 14px;
    line-height: 20px;
    font-weight: bold;
    color: #0000f5;
`

const Separator = styled.i`
    width: 2px;
    height: 20px;
    border-left: 1px solid #a3b6d0;
    background: #fff;
`

const Columns = styled.div`
    display: flex;
    flex: 1;
`

const Entry = styled.section`
    display: flex;
    flex: 1;
    flex-direction: column;
    font-size: 14px;
    line-height: 18px;
`

const PanelTitle = styled.h2`
    height: 21px;
    padding: 1px 0 0 11px;
    border-top: 1px solid ${LINE};
    border-bottom: 1px solid #a9bfdc;
    background: linear-gradient(#dbe7f7, #c5d9f0);
    font-size: 14px;
    font-weight: bold;
`

const Form = styled.div`
    display: flex;
    flex-direction: column;
    gap: 4px;
    padding: 6px 4px 4px;
`

const Field = styled.div`
    display: grid;
    grid-template-columns: ${props => props.$wide ? '88px 400px' : '65px 145px'};
    align-items: center;
    white-space: nowrap;
`

const Box = styled.div`
    display: flex;
    height: ${props => props.$low ? 24 : 25}px;
    border: 1px solid ${LINE};
    background: ${props => props.$locked ? '#cfdcee' : '#fff'};
`

const Text = styled.input`
    flex: 1;
    width: 0;
    min-width: 0;
    padding: 0 3px;
    border: 0;
    background: none;
    font: inherit;
    color: ${props => props.$total ? '#f00' : '#000'};
    ${props => props.$bold && css`
        font-size: 15px;
        font-weight: bold;
    `}
    ${props => props.$total && css`
        padding-right: 255px;
        font-weight: bold;
        text-align: right;
    `}
`

const Select = styled.select`
    flex: 1;
    min-width: 0;
    border: 0;
    appearance: none;
    background: none;
    font: inherit;
`

const DropButton = styled.button`
    display: flex;
    align-items: center;
    justify-content: center;
    width: 16px;
    border-left: 1px solid ${LINE};
    background: linear-gradient(#eaf2fb, #d3e1f2);
`

const RefreshButton = styled(DropButton)`
    width: 20px;
`

const Sheet = styled.div`
    display: flex;
    flex: 1;
    flex-direction: column;
    justify-content: space-between;
    margin-left: 4px;
    border: 1px solid ${LINE};
    background: #fff;
`

const GoodsTable = styled.table`
    width: 100%;
    table-layout: fixed;
    border-collapse: collapse;
    color: #000;

    th, td { height: 26px; padding: 0 4px; text-align: left; }
    th:first-child {
        width: 30px;
        border-right: 1px solid ${LINE};
        border-bottom: 1px solid ${LINE};
        padding: 0 6px;
        background: #e8f1fb;
        font-size: 12px;
        white-space: nowrap;
        overflow: hidden;
    }
    thead th {
        height: 23px;
        border-bottom: 1px solid ${LINE};
        background: linear-gradient(#f0f5fd, #dfeaf8);
        font-size: 12px;
        color: ${NAVY};
    }
    td { border-bottom: 1px solid #c3d7f2; }
    .current td { background: #e2ebf6; }
    small { font-size: 8px; }
`

const RowMark = styled.i`
    display: inline-block;
    border: 4px solid transparent;
    border-left-color: #000;
    border-right: 0;
    margin-right: 4px;
    vertical-align: middle;
`

const SheetFoot = styled.div`
    height: 30px;
    border-top: 1px solid ${LINE};
    background: linear-gradient(#f0f5fd, #dfeaf8);
`

const Actions = styled.div`
    display: flex;
    align-items: center;
    gap: 12px;
    height: 49px;
    padding-left: 8px;
    border-top: 1px solid ${LINE};
    background: linear-gradient(#eef4fd, #d6e2f1);
`

const Dock = styled.aside`
    display: flex;
    flex-direction: column;
    width: 322px;
    margin: 2px 1px 51px 0;
    padding: 0 4px 3px 0;
    border: 1px solid #7889a8;
    border-right-width: 2px;
    border-radius: 2px;
    font-size: 14px;
    line-height: 18px;
`

const DockTools = styled.div`
    display: flex;
    justify-content: flex-end;
    gap: 9px;
    height: 28px;
    padding: 6px 2px 0 0;

    button { height: 10px; }
`

const SearchForm = styled.div`
    display: flex;
    flex-direction: column;
    gap: 4px;
    padding-left: 58px;

    label { height: 17px; }
    > :last-child { margin-top: 2px; }
`

const SearchButton = styled.button`
    display: flex;
    align-items: center;
    align-self: flex-end;
    justify-content: center;
    gap: 4px;
    width: 91px;
    height: 25px;
    margin: 5px 0 3px;
    border: 1px solid #abc0dc;
    border-radius: 3px;
    background: linear-gradient(#eaf2fb, #d3e1f2);
    font-weight: bold;
    color: #0000f5;
`

const ResultSheet = styled.div`
    display: flex;
    flex: 1;
    flex-direction: column;
    border: 1px solid ${LINE};
    background: #fff;
`

const ResultTable = styled.table`
    width: 100%;
    table-layout: fixed;
    border-collapse: collapse;
    color: #000;

    th, td {
        height: 28px;
        padding: 0 4px;
        overflow: hidden;
        border-right: 1px solid #c3d7f2;
        border-bottom: 1px solid #c3d7f2;
        text-align: left;
        white-space: nowrap;
    }
    th {
        height: 23px;
        border-color: ${LINE};
        background: linear-gradient(#f0f5fd, #dfeaf8);
        font-size: 12px;
        color: ${NAVY};
    }
    th:last-child, td:last-child { border-right: 0; }
    .filter td { height: 32px; border-bottom: 5px solid #e3edf9; }
    .filter svg, .filter span { vertical-align: middle; }
    .num { padding: 0 2px; text-align: right; }
    .current td { background: #e2ebf6; }
`

const FilterMark = styled.span`
    display: inline-flex;
    align-items: center;
    font: 7px/11px 'DejaVu Sans Mono', monospace;
    color: #44608f;

    b { padding: 0 2px; background: #3fa648; color: #fff; }
`

const ResultFoot = styled.div`
    display: flex;
    justify-content: flex-end;
    height: 28px;
    padding: 4px 81px 4px 0;
    border-top: 1px solid ${LINE};
    background: linear-gradient(#f0f5fd, #dfeaf8);
    font-weight: bold;
    color: #f00;

    span { padding-right: 4px; border-right: 1px solid ${LINE}; }
`

const HScroll = styled.div`
    display: flex;
    align-items: center;
    justify-content: space-between;
    height: 17px;
    padding: 0 ${props => props.$wide ? 23 : 6}px 0 5px;
    background: linear-gradient(#c6d5e8, #dbe6f4);
`

const HThumb = styled.i`
    width: 181px;
    height: 15px;
    border: 1px solid #8faad0;
    border-radius: 2px;
    background: linear-gradient(#e5effb, #ccdcf0);
`

const sides = { up: 'bottom', down: 'top', left: 'right', right: 'left' };
const edges = { up: 'top', down: 'bottom', left: 'left', right: 'right' };

const Arrow = styled.i`
    flex: none;
    border: 5px solid transparent;
    border-${props => edges[props.$dir]}: 0;
    border-${props => sides[props.$dir]}-color: ${props => props.$off ? '#a3b2c9' : '#46557a'};
`

const Spacer = styled.div`
    flex: 1;
`

const StatusBar = styled.footer`
    display: flex;
    align-items: center;
    gap: 13px;
    height: 23px;
    padding: 1px 7px 0 6px;
    border-top: 1px solid ${LINE};
    background: linear-gradient(#e3edf8, #cbd8e8 40%, #b9c9dd);
    white-space: nowrap;
    color: #8593a6;

    > i { width: 1px; height: 11px; background: #8593a6; }
    > ${Separator} { width: 2px; height: 19px; margin-right: -4px; background: #fff; }
`

const Window = styled.div`
    position: absolute;
    top: 164px;
    right: 246px;
    bottom: 30px;
    left: 221px;
    display: flex;
    flex-direction: column;
    border: 1px solid #fff;
    border-top: 0;
    background: #cfdcee;
    box-shadow: 0 4px 18px rgba(20, 35, 60, .55);
`

const WindowTitle = styled.div`
    display: grid;
    grid-template-columns: 1fr auto 1fr;
    align-items: center;
    height: 32px;
    border-bottom: 1px solid #a1b4cf;
    background: #fff;
    color: #000;

    h2 { font: 12px/16px 'Open Sans', 'Noto Sans', sans-serif; }
`

const WindowIcon = styled.span`
    display: flex;
    padding-left: 1px;
`

const WindowButtons = styled.div`
    display: flex;
    justify-content: flex-end;
    gap: 35px;
    padding-right: 18px;

    button { height: 10px; }
`

const Preview = styled.div`
    display: flex;
    flex: 1;
    min-height: 0;
    background: linear-gradient(#cfdced, #b9cae2 35%, #84a0bf);
`

const PreviewArea = styled.div`
    display: flex;
    align-items: flex-start;
    justify-content: center;
    flex: 1;
    overflow: hidden;
    padding-top: 25px;
`

const VScroll = styled.div`
    display: flex;
    flex-direction: column;
    align-items: center;
    width: 17px;
    padding: 9px 0 5px;
    background: linear-gradient(to right, #c9d8ea, #dde8f5);
`

const VThumb = styled.div`
    display: flex;
    flex: 371;
    align-items: center;
    justify-content: center;
    width: 15px;
    margin-top: 5px;
    border: 1px solid #8faad0;
    border-radius: 2px;
    background: linear-gradient(to right, #e8f1fb, #ccdcf0);
`

const VRest = styled.div`
    flex: 276;
`

const Grip = styled.i`
    width: 7px;
    height: 8px;
    background: repeating-linear-gradient(#8ba4cc 0 1px, transparent 1px 2px);
`

const PreviewStatus = styled.div`
    display: flex;
    align-items: center;
    gap: 7px;
    height: 25px;
    padding: 0 2px 0 6px;
    border-top: 1px solid ${LINE};
    background: linear-gradient(#dfe9f5, #b7c9df);

    label { margin-right: 4px; }
    > svg { margin-left: 4px; }
`

const RoundButton = styled.button`
    display: flex;
    align-items: center;
    justify-content: center;
    width: 16px;
    height: 16px;
    border: 1px solid #747b8c;
    border-radius: 50%;
    background: linear-gradient(#fff, #d9dce3);
`

const ZoomRange = styled.input`
    width: 94px;
    height: 16px;
    margin: 0;
    appearance: none;
    background: linear-gradient(to right, #b9cee9, #3a69ab 50%, ${LINE} 50%) center / 100% 2px no-repeat;

    &::-webkit-slider-thumb {
        appearance: none;
        width: 9px;
        height: 15px;
        border: 1px solid #e0b02e;
        border-radius: 1px 1px 5px 5px;
        background: #fff2b8;
    }
`

const Page = styled.article`
    flex: none;
    width: 800px;
    aspect-ratio: 210 / 297;
    padding: 35px 21px 0 24px;
    border: 1px solid #8c8c8c;
    outline: 1px solid #f5ab1c;
    background:
        repeating-linear-gradient(to bottom, #a5a5a5 0 3px, transparent 3px 4px) 12px 3px / 1px 100% no-repeat,
        repeating-linear-gradient(to bottom, #a5a5a5 0 3px, transparent 3px 4px) 786px 3px / 1px 100% no-repeat,
        repeating-linear-gradient(to right, #a5a5a5 0 3px, transparent 3px 4px) 4px 21px / 791px 1px no-repeat,
        #fff;
    box-shadow: 2px 2px 9px rgba(50, 70, 100, .6);
    font: 15px/19px 'Liberation Serif', serif;
    color: #000;
`

const ReportTitle = styled.h2`
    text-align: center;
    font-size: 21px;
    line-height: 28px;
`

const ReportDate = styled.p`
    text-align: center;
    font-size: 14px;
    line-height: 14px;
`

const ReportCode = styled.p`
    padding-right: 2px;
    text-align: right;
    font-size: 16px;
    line-height: 26px;
`

const Facts = styled.dl`
    padding: 0 1px 0 4px;
    white-space: nowrap;
`

const Fact = styled.div`
    display: flex;
    justify-content: ${props => props.$spread ? 'space-between' : 'flex-start'};

    dt { width: ${props => props.$w ? props.$w + 'px' : 'auto'}; }
`

const ItemTable = styled.table`
    width: 751px;
    margin-left: 2px;
    table-layout: fixed;
    border-collapse: collapse;
    white-space: nowrap;

    th {
        height: 20px;
        padding: 0;
        border: 1px solid #808080;
        font-weight: normal;
    }
    td {
        height: 21px;
        padding: 0 3px;
        border: 1px dotted #000;
        text-align: center;
    }
    td:nth-child(2) { text-align: left; }
    td:nth-child(n + 6) { font-size: 16px; text-align: right; }
`

const Summary = styled.div`
    display: grid;
    grid-template-columns: 250px 250px 250px;
    margin-left: 2px;
`

const Signer = styled.div`
    grid-column: 2;
    display: flex;
    flex-direction: column;
    align-items: center;
    padding-top: 19px;

    span:last-child { margin-top: 40px; }
`

const Totals = styled.table`
    border-collapse: collapse;

    th, td { height: 20px; padding: 0; text-align: right; font-weight: normal; white-space: nowrap; }
    th { width: 131px; }
    td { padding-right: 1px; font-size: 16px; }
    tr:first-child td { font-weight: bold; }
`

const Notes = styled.div`
    padding: 2px 0 0 4px;
`

const Warning = styled.p`
    padding-right: 4px;
    text-align: center;
    white-space: nowrap;
`

const Pointer = styled.svg`
    position: absolute;
    top: 499px;
    left: 988px;
`
